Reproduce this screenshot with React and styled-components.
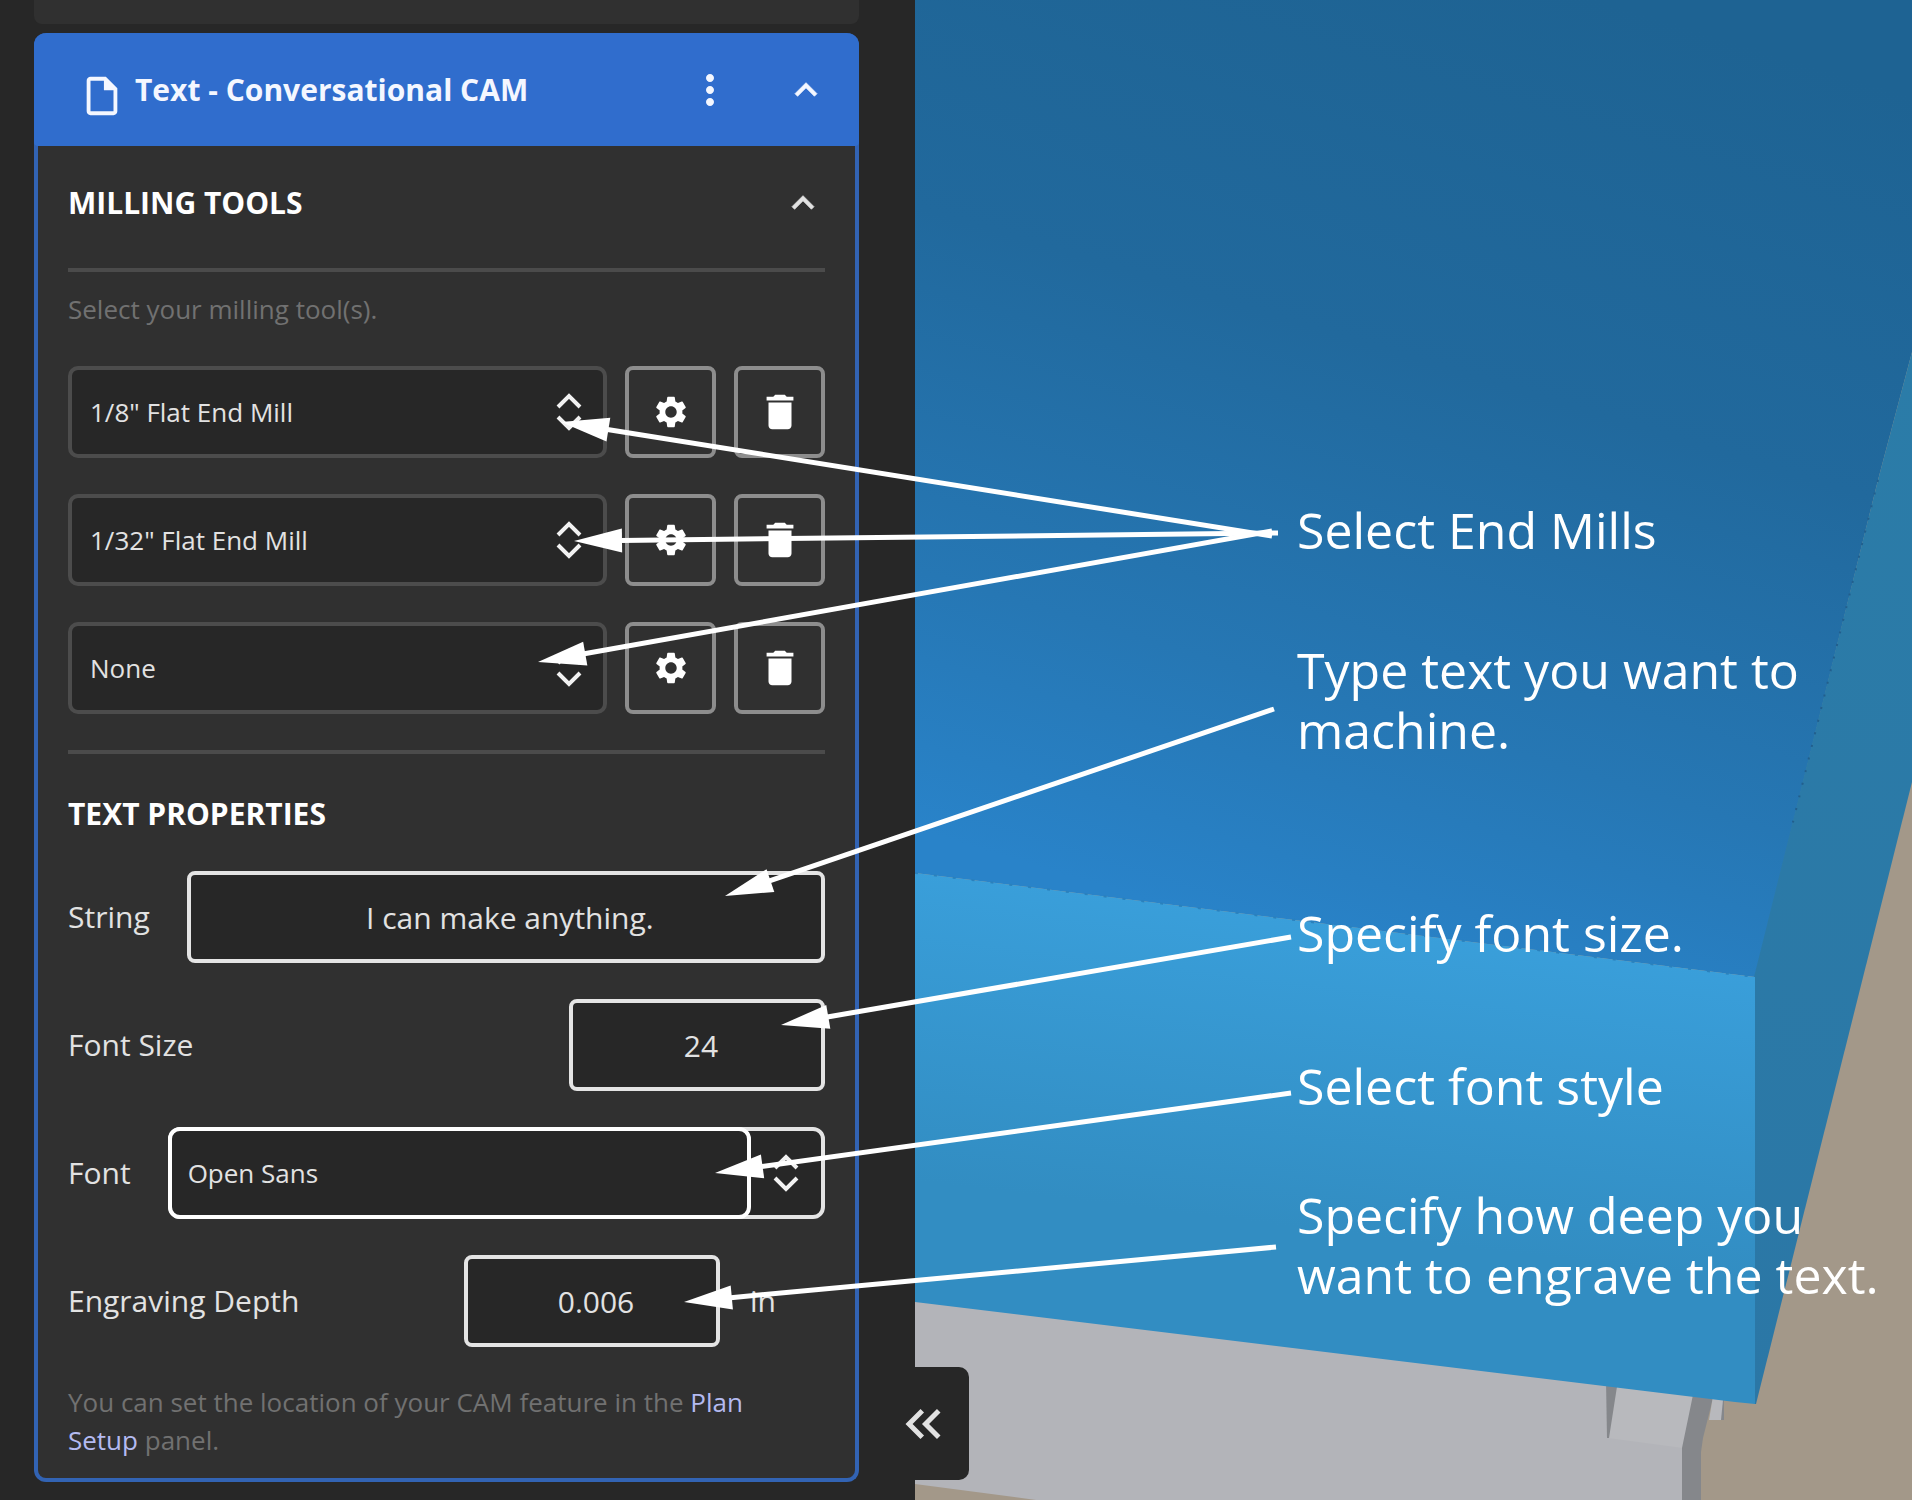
import React, { useState } from "react";
import styled, { createGlobalStyle } from "styled-components";
import {
    MdDelete,
    MdExpandLess,
    MdKeyboardDoubleArrowLeft,
    MdMoreVert,
    MdOutlineInsertDriveFile,
    MdSettings,
} from "react-icons/md";

const GlobalStyle = createGlobalStyle`
    * {
        box-sizing: border-box;
    }
    body {
        margin: 0;
        background: #272727;
        color: #e2e2e2;
        font-family: "Open Sans", "Noto Sans", sans-serif;
        font-size: 30px;
        line-height: 38px;
    }
    button, input, select {
        font: inherit;
        color: inherit;
    }
    svg {
        display: block;
    }
`;

const Page = styled.div`
    position: relative;
    display: flex;
    min-height: 100vh;
    overflow: hidden;
`;

const Sidebar = styled.aside`
    flex: 0 0 915px;
    padding: 0 56px 18px 34px;
    background: #272727;
`;

const PreviousCard = styled.div`
    height: 24px;
    margin-bottom: 9px;
    border-radius: 0 0 8px 8px;
    background: #303030;
`;

const Card = styled.section`
    border: 4px solid #3263b3;
    border-top: 0;
    border-radius: 12px;
    background: #303030;
`;

const CardHeader = styled.header`
    display: flex;
    align-items: center;
    height: 113px;
    margin: 0 -4px;
    padding: 0 29px 0 45px;
    border-radius: 12px 12px 4px 4px;
    background: #306dcd;
    color: #f4f7ff;
`;

const FileIcon = styled(MdOutlineInsertDriveFile)`
    margin-top: 12px;
`;

const CardTitle = styled.h1`
    flex: 1;
    margin: 0 0 0 10px;
    font-size: 30px;
    font-weight: 700;
`;

const IconButton = styled.button`
    display: flex;
    align-items: center;
    justify-content: center;
    width: 48px;
    height: 52px;
    margin-left: ${(props) => props.$gap || 0}px;
    padding: 0;
    border: 0;
    background: none;
`;

const Chevron = styled(MdExpandLess)`
    path:not([fill="none"]) {
        stroke: currentColor;
        stroke-width: 0.4;
    }
    path[fill="none"] {
        stroke: none;
    }
`;

const CardBody = styled.div`
    padding: 0 30px 19px;
`;

const SectionHeader = styled.div`
    display: flex;
    align-items: center;
    justify-content: space-between;
    height: 114px;
    margin: 0 -2px 8px 0;
`;

const SectionTitle = styled.h2`
    margin: 0;
    color: #ffffff;
    font-size: 30px;
    font-weight: 700;
`;

const TextSection = styled.div`
    margin-top: 41px;
`;

const Divider = styled.hr`
    height: 4px;
    margin: 0;
    border: 0;
    background: #4b4b4b;
`;

const Hint = styled.p`
    margin: ${(props) => props.$top}px 0 0;
    padding-right: 40px;
    color: #717171;
    font-size: 26px;

    a {
        color: #b4baf0;
        text-decoration: none;
    }
`;

const Rows = styled.div`
    display: flex;
    flex-direction: column;
    gap: 36px;
    margin: 38px 0 36px;
`;

const ToolRow = styled.div`
    display: flex;
    gap: 18px;
`;

const SelectBox = styled.div`
    display: grid;
    flex: 1;
    align-items: center;

    > * {
        grid-area: 1 / 1;
    }
    svg {
        justify-self: end;
        margin-right: 25px;
        pointer-events: none;
    }
`;

const Select = styled.select`
    width: 100%;
    height: 92px;
    padding: 0 18px;
    border: 4px solid #4c4c4c;
    border-radius: 10px;
    background: #272727;
    font-size: 26px;
    appearance: none;
`;

const ToolButton = styled.button`
    display: flex;
    align-items: center;
    justify-content: center;
    width: 91px;
    height: 92px;
    padding: 0;
    border: 4px solid #8d8d8d;
    border-radius: 8px;
    background: #303030;
    color: #ffffff;
`;

const FieldRow = styled.div`
    display: flex;
    align-items: center;
    justify-content: space-between;
    gap: 37px;
`;

const Field = styled.input`
    flex: ${(props) => (props.$wide ? "1" : "0 0 256px")};
    min-width: 0;
    height: 92px;
    padding: 0 0 0 8px;
    border: 4px solid #e4e4e4;
    border-radius: 8px;
    background: #272727;
    text-align: center;
`;

const Measure = styled.div`
    display: flex;
    align-items: center;
    gap: 30px;
`;

const Unit = styled.span`
    width: 75px;
`;

const ComboBox = styled.div`
    display: flex;
    flex: 1;
    border: 4px solid #e4e4e4;
    border-radius: 12px;
    background: #272727;
`;

const ComboInput = styled.input`
    flex: 1;
    min-width: 0;
    height: 92px;
    margin: -4px 0 -4px -4px;
    padding: 0 16px;
    border: 4px solid #ffffff;
    border-radius: 12px;
    background: #272727;
    font-size: 26px;
`;

const ComboButton = styled.button`
    display: flex;
    align-items: center;
    justify-content: center;
    width: 70px;
    padding: 0;
    border: 0;
    background: none;
`;

const Workspace = styled.main`
    position: relative;
    flex: 1;
    background: #a39889;
`;

const Scene = styled.svg`
    position: absolute;
    inset: 0;
    width: 100%;
    height: 100%;
`;

const CollapseButton = styled.button`
    position: absolute;
    left: -22px;
    bottom: 20px;
    display: flex;
    align-items: center;
    width: 76px;
    height: 113px;
    padding: 0;
    border: 0;
    border-radius: 0 10px 10px 0;
    background: #272727;
`;

const Callout = styled.p`
    position: absolute;
    top: ${(props) => props.$top}px;
    left: 1297px;
    margin: 0;
    color: #ffffff;
    font-size: 50px;
    line-height: 60px;
    white-space: pre;
`;

const ArrowLayer = styled.svg`
    position: absolute;
    top: 0;
    left: 0;
    width: 100%;
    height: 100%;
    pointer-events: none;
`;

const mills = ['1/8" Flat End Mill', '1/32" Flat End Mill', "None"];

const callouts = [
    { top: 500, text: "Select End Mills" },
    { top: 640, text: "Type text you want to\nmachine." },
    { top: 903, text: "Specify font size." },
    { top: 1056, text: "Select font style" },
    { top: 1185, text: "Specify how deep you\nwant to engrave the text." },
];

// [tail x, tail y, tip x, tip y]
const arrows = [
    [1272, 536, 561, 422],
    [1278, 533, 574, 541],
    [1272, 531, 538, 662],
    [1274, 709, 725, 896],
    [1291, 937, 781, 1025],
    [1291, 1093, 715, 1173],
    [1276, 1247, 684, 1302],
];

function UnfoldIcon(){
    return(
        <svg width="26" height="38" viewBox="0 0 26 38" fill="none" stroke="#f2f2f2" strokeWidth="4">
            <path d="M2 14L13 3l11 11M2 24l11 11 11-11" />
        </svg>
    )
}

function Arrow(props){
    const [x1, y1, x2, y2]=props.points;
    const length=Math.hypot(x2 - x1, y2 - y1);
    const dx=(x2 - x1) / length;
    const dy=(y2 - y1) / length;
    const bx=x2 - dx * 48;
    const by=y2 - dy * 48;
    return(
        <g>
            <line x1={x1} y1={y1} x2={bx + dx} y2={by + dy} stroke="#fff" strokeWidth="5" />
            <polygon
                fill="#fff"
                points={`${x2},${y2} ${bx - dy * 12},${by + dx * 12} ${bx + dy * 12},${by - dx * 12}`}
            />
        </g>
    )
}

function SceneView(){
    return(
        <Scene viewBox="915 0 997 1500" preserveAspectRatio="xMinYMin slice">
            <defs>
                <linearGradient id="top" gradientUnits="userSpaceOnUse" x1="1600" y1="0" x2="1310" y2="950">
                    <stop offset="0" stopColor="#1e6393" />
                    <stop offset="0.4" stopColor="#21699d" />
                    <stop offset="0.75" stopColor="#2677b4" />
                    <stop offset="1" stopColor="#2983c9" />
                </linearGradient>
                <linearGradient id="front" gradientUnits="userSpaceOnUse" x1="1360" y1="900" x2="1320" y2="1230">
                    <stop offset="0" stopColor="#3aa0dc" />
                    <stop offset="1" stopColor="#328dc2" />
                </linearGradient>
                <linearGradient id="side" x1="0" y1="0" x2="0" y2="1">
                    <stop offset="0" stopColor="#2b7ca8" />
                    <stop offset="1" stopColor="#2b77a6" />
                </linearGradient>
            </defs>
            <path d="M915 1290L1700 1385V1500H1036L915 1484Z" fill="#b3b4b9" />
            <path d="M1618 1380L1694 1390V1400L1683 1448L1608 1438Z" fill="#b8b9bd" />
            <path d="M1606 1380H1618L1609 1438H1607Z" fill="#85878b" />
            <path d="M1694 1390H1715L1703 1438L1701 1452V1500H1682V1448Z" fill="#85878b" />
            <path d="M1714 1390H1725L1722 1420H1709Z" fill="#b8b9bd" />
            <path d="M1724 1390L1721 1420H1724Z" fill="#85878b" />
            <path d="M915 0H1912V352L1878 480L1755 977L915 873Z" fill="url(#top)" />
            <path d="M1912 352V782L1756 1404L1754 1404V977L1878 480Z" fill="url(#side)" />
            <path d="M1878 480L1791 830" stroke="#225f8d" strokeWidth="2" strokeDasharray="2 11" />
            <path d="M915 873L1755 977V1404L1735 1402L915 1302Z" fill="url(#front)" />
            <path d="M915 873L1755 977" stroke="#2a81bd" strokeWidth="2" strokeDasharray="3 16" />
        </Scene>
    )
}

function App(){
    const [text, setText]=useState("I can make anything.");
    const [size, setSize]=useState("24");
    const [font, setFont]=useState("Open Sans");
    const [depth, setDepth]=useState("0.006");

    return(
        <Page>
            <GlobalStyle />
            <Sidebar>
                <PreviousCard />
                <Card>
                    <CardHeader>
                        <FileIcon size={46} />
                        <CardTitle>Text - Conversational CAM</CardTitle>
                        <IconButton type="button" aria-label="More options">
                            <MdMoreVert size={52} />
                        </IconButton>
                        <IconButton type="button" aria-label="Collapse card" $gap={48}>
                            <Chevron size={44} />
                        </IconButton>
                    </CardHeader>
                    <CardBody>
                        <SectionHeader>
                            <SectionTitle>MILLING TOOLS</SectionTitle>
                            <IconButton type="button" aria-label="Collapse milling tools">
                                <Chevron size={44} />
                            </IconButton>
                        </SectionHeader>
                        <Divider />
                        <Hint $top={18}>Select your milling tool(s).</Hint>
                        <Rows>
                            {mills.map((mill, index)=>(
                                <ToolRow key={mill}>
                                    <SelectBox>
                                        <Select aria-label={`Milling tool ${index + 1}`} defaultValue={mill}>
                                            {mills.map((item)=><option key={item}>{item}</option>)}
                                        </Select>
                                        <UnfoldIcon />
                                    </SelectBox>
                                    <ToolButton type="button" aria-label="Tool settings">
                                        <MdSettings size={38} />
                                    </ToolButton>
                                    <ToolButton type="button" aria-label="Remove tool">
                                        <MdDelete size={46} />
                                    </ToolButton>
                                </ToolRow>
                            ))}
                        </Rows>
                        <Divider />
                        <TextSection>
                            <SectionTitle>TEXT PROPERTIES</SectionTitle>
                        </TextSection>
                        <Rows>
                            <FieldRow>
                                <label htmlFor="string">String</label>
                                <Field id="string" $wide value={text} onChange={(event)=>{setText(event.target.value)}} />
                            </FieldRow>
                            <FieldRow>
                                <label htmlFor="size">Font Size</label>
                                <Field id="size" value={size} onChange={(event)=>{setSize(event.target.value)}} />
                            </FieldRow>
                            <FieldRow>
                                <label htmlFor="font">Font</label>
                                <ComboBox>
                                    <ComboInput id="font" value={font} onChange={(event)=>{setFont(event.target.value)}} />
                                    <ComboButton type="button" aria-label="Show fonts">
                                        <UnfoldIcon />
                                    </ComboButton>
                                </ComboBox>
                            </FieldRow>
                            <FieldRow>
                                <label htmlFor="depth">Engraving Depth</label>
                                <Measure>
                                    <Field id="depth" value={depth} onChange={(event)=>{setDepth(event.target.value)}} />
                                    <Unit>in</Unit>
                                </Measure>
                            </FieldRow>
                        </Rows>
                        <Hint $top={0}>
                            You can set the location of your CAM feature in the <a href="#plan-setup">Plan Setup</a> panel.
                        </Hint>
                    </CardBody>
                </Card>
            </Sidebar>
            <Workspace>
                <SceneView />
                <CollapseButton type="button" aria-label="Hide panel">
                    <MdKeyboardDoubleArrowLeft size={60} />
                </CollapseButton>
            </Workspace>
            <ArrowLayer>
                {arrows.map((points)=><Arrow key={points.join()} points={points} />)}
            </ArrowLayer>
            {callouts.map((item)=><Callout key={item.top} $top={item.top}>{item.text}</Callout>)}
        </Page>
    )
}
export default App;
